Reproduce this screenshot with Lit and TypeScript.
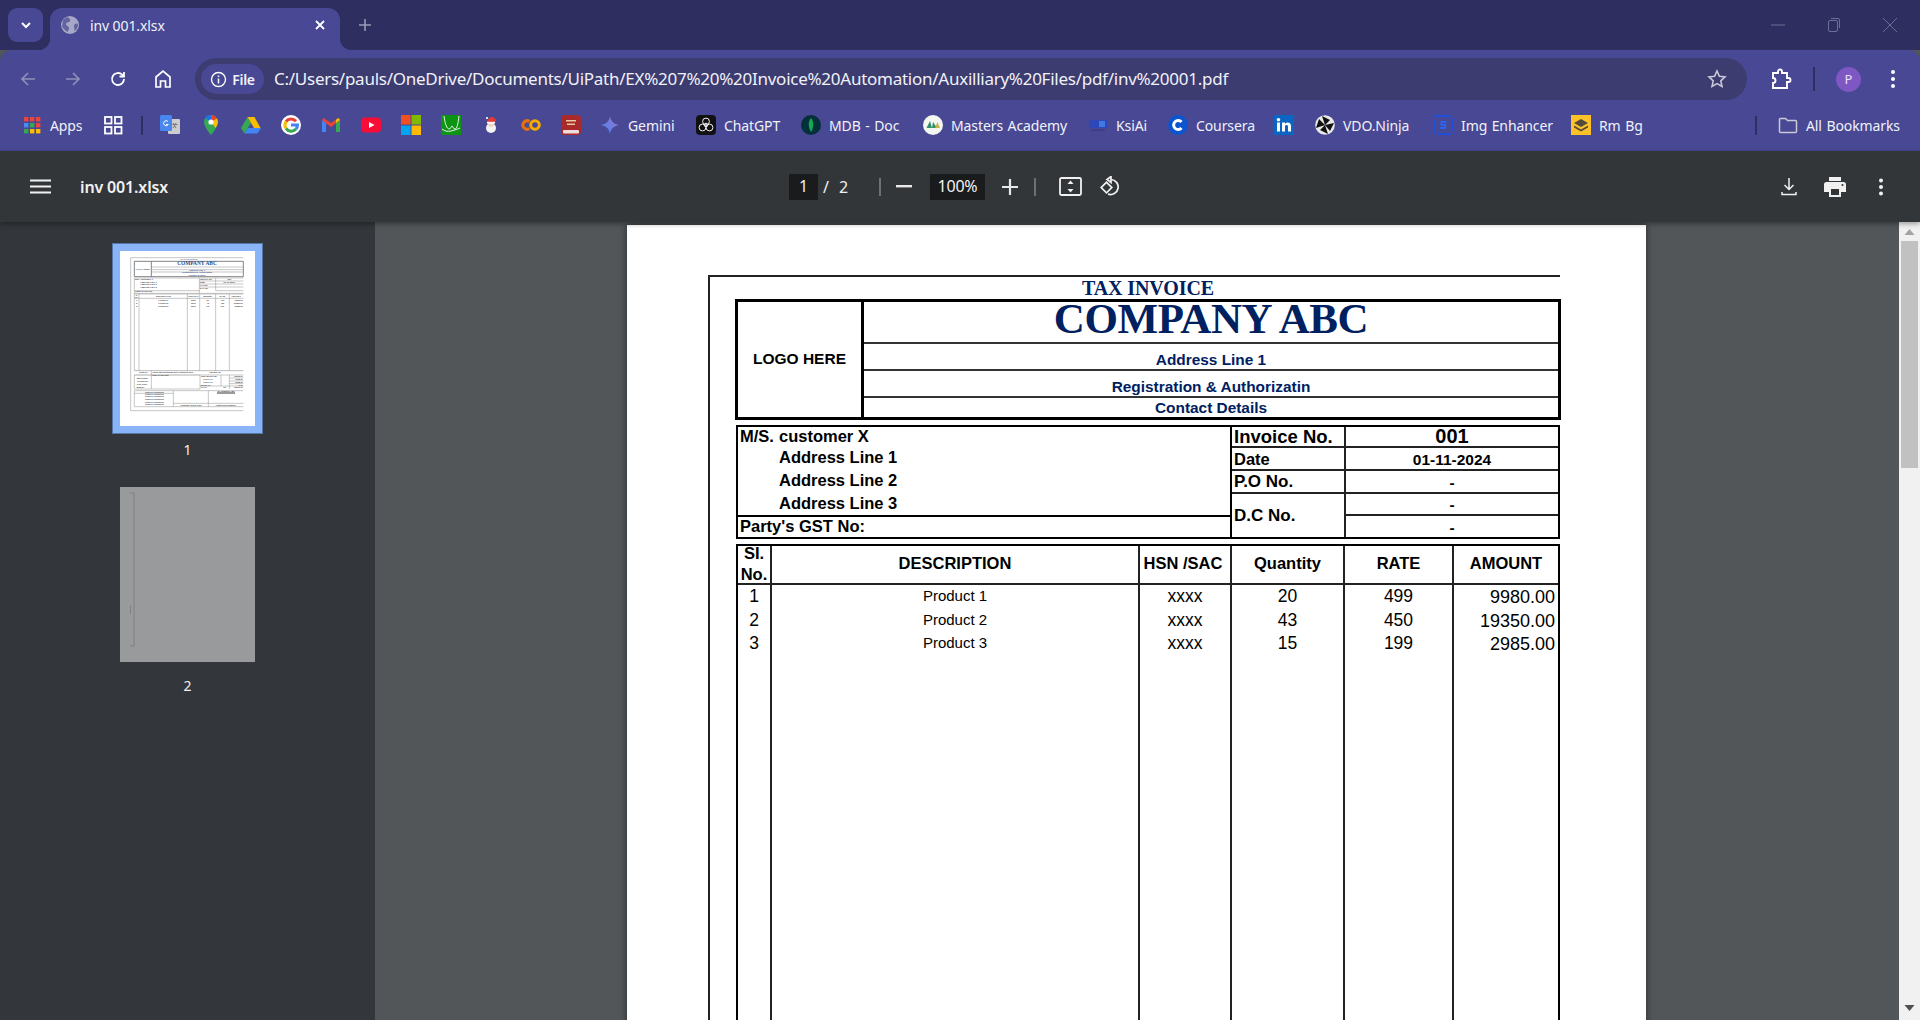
import { LitElement, html, css, svg } from "lit";
import { customElement } from "lit/decorators.js";

const bmIcons: Record<string, unknown> = {
  apps: svg`${[0,1,2].flatMap(r=>[0,1,2].map(c=>svg`<rect x=${2+c*6} y=${2+r*6} width="4.4" height="4.4" fill=${[["#e8453c","#e8453c","#e8453c"],["#4a8af4","#34a853","#e8453c"],["#34a853","#fbbc05","#fbbc05"]][r][c]}/>`))}`,
  grid: svg`<g fill="none" stroke="#fff" stroke-width="1.8"><rect x="2" y="2" width="6.5" height="6.5"/><rect x="12" y="2" width="6.5" height="6.5"/><rect x="2" y="12" width="6.5" height="6.5"/><rect x="12" y="12" width="6.5" height="6.5"/></g>`,
  translate: svg`<rect x="8" y="4" width="12" height="15" rx="1" fill="#ccc"/><rect x="0" y="0" width="12" height="16" rx="1.5" fill="#4a86f0"/><path d="M13 8l3 5M16 8l-3 5M12.5 9.5h5" stroke="#777" fill="none"/><path d="M8 6.5a2.5 2.5 0 1 0 .3 3H6" stroke="#fff" stroke-width="1" fill="none"/>`,
  maps: svg`<path d="M10 0a7 7 0 0 0-7 7c0 5 7 13 7 13s7-8 7-13a7 7 0 0 0-7-7z" fill="#34a853"/><path d="M4 2.8A7 7 0 0 1 10 0v7z" fill="#1a73e8"/><path d="M10 0a7 7 0 0 1 6 3.4L10 7z" fill="#ea4335"/><path d="M16 3.4A7 7 0 0 1 17 7c0 2-1.2 4.2-2.5 6L10 7z" fill="#fbbc05"/><circle cx="10" cy="7" r="2.6" fill="#fff"/>`,
  drive: svg`<path d="M6.5 2L0 13l3.5 5.500L10 8z" fill="#34a853"/><path d="M3.5 18.500h13L20 13H7z" fill="#4285f4"/><path d="M13.500 2l6 11h-6.500L6.500 2z" fill="#fbbc05"/>`,
  google: svg`<circle cx="10" cy="10" r="10" fill="#fff"/><g fill="none" stroke-width="3"><path d="M15 6.200A6.500 6.500 0 0 0 5 6.500" stroke="#ea4335"/><path d="M5 6.500a6.500 6.500 0 0 0 0 7" stroke="#fbbc05"/><path d="M5 13.500a6.500 6.500 0 0 0 10 .6" stroke="#34a853"/><path d="M15 14.100A6.500 6.500 0 0 0 16.500 10H10" stroke="#4285f4"/></g>`,
  gmail: svg`<path d="M1 5v12h4V8z" fill="#4285f4"/><path d="M15 8v9h4V5z" fill="#34a853"/><path d="M1 5l9 7 9-7-1.500-2L10 8 2.500 3z" fill="#ea4335"/><path d="M15 8l4-3-1.500-2L15 4.800z" fill="#fbbc05"/>`,
  yt: svg`<rect x="0" y="2.500" width="20" height="15" rx="4" fill="#f70d36"/><path d="M8 7l5.500 3L8 13z" fill="#fff"/>`,
  ms: svg`<rect width="9.500" height="9.500" fill="#f25022"/><rect x="10.500" width="9.500" height="9.500" fill="#7fba00"/><rect y="10.500" width="9.500" height="9.500" fill="#00a4ef"/><rect x="10.500" y="10.500" width="9.500" height="9.500" fill="#ffb900"/>`,
  green: svg`<rect width="20" height="20" fill="#0d9412"/><path d="M3 1c1 8 3 13 5 13s2-3 3-3 1 3 3 3 3-5 4-13M1 14c3 2 5 3 9 2s7-2 9-3" stroke="#fff" stroke-width=".9" fill="none"/>`,
  santa: svg`<circle cx="10" cy="13" r="5" fill="#f3f3f3"/><circle cx="10" cy="9" r="3" fill="#f6d6c0"/><path d="M6 8c0-4 3-6 5-6s3 2 4 3l-1 3z" fill="#e53935"/><rect x="6" y="6.800" width="8" height="1.800" fill="#fff"/><circle cx="6" cy="3" r="1.100" fill="#fff"/>`,
  co: svg`<g fill="none" stroke-width="3"><path d="M8.500 6.500a4.200 4.200 0 1 0 0 7" stroke="#e8710a"/><circle cx="14" cy="10" r="4.300" stroke="#f9ab00"/></g>`,
  book: svg`<rect width="20" height="20" rx="4" fill="#a82a2a"/><rect y="15" x="2" width="16" height="3.500" rx="1" fill="#f0dcdc"/><rect x="5" y="5" width="10" height="1.500" fill="#e9c9a0"/><rect x="6" y="8.500" width="8" height="1.500" fill="#e9c9a0"/>`,
  gemini: svg`<defs><linearGradient id="gm" x1="0" y1="1" x2="1" y2="0"><stop offset="0" stop-color="#4285f4"/><stop offset="1" stop-color="#9b72cb"/></linearGradient></defs><path d="M10 1c.8 5 3.500 8 9 9-5.500 1-8.200 4-9 9-.8-5-3.500-8-9-9 5.500-1 8.200-4 9-9z" fill="url(#gm)"/>`,
  chatgpt: svg`<rect width="20" height="20" rx="4" fill="#111"/><g fill="none" stroke="#eee" stroke-width="1"><circle cx="10" cy="6.500" r="3.400"/><circle cx="6.500" cy="12.500" r="3.400"/><circle cx="13.500" cy="12.500" r="3.400"/><circle cx="10" cy="10" r="1.800"/></g>`,
  mdb: svg`<circle cx="10" cy="10" r="10" fill="#04303a"/><path d="M10 3c3 3.500 3 9 0 14-3-5-3-10.500 0-14z" fill="#13aa52"/>`,
  masters: svg`<circle cx="10" cy="10" r="10" fill="#f4f6f0"/><path d="M3.500 13L7 6l2 7zM9 13l1-6 4 6z" fill="#2f8f6b"/><path d="M12 13l2.500-6 2.500 6z" fill="#c9b24a"/>`,
  ksi: svg`<rect x="1" y="5" width="18" height="8" fill="#2f47b8"/><rect x="11" y="6" width="6" height="6" fill="#3e7be0"/><rect x="3" y="14.500" width="14" height="1.200" fill="#39397c"/>`,
  coursera: svg`<circle cx="10" cy="10" r="10" fill="#0b56d0"/><path d="M13.500 7a4.500 4.500 0 1 0 0 6" fill="none" stroke="#fff" stroke-width="3"/>`,
  in: svg`<rect width="20" height="20" fill="#0a66c2"/><rect x="3" y="7.500" width="3" height="9" fill="#fff"/><circle cx="4.500" cy="4.800" r="1.800" fill="#fff"/><path d="M8 7.500h3v1.400c1.500-2.400 6-2 6 2.100v5.500h-3v-5c0-2-3-2-3 0v5H8z" fill="#fff"/>`,
  vdo: svg`<circle cx="10" cy="10" r="9.800" fill="#e8e8e8"/><path d="M10 10L7 1l8 4zM10 10l9-2-4 8zM10 10l3 9-8-4zM10 10L1 13l3-9z" fill="#111"/>`,
  img: svg`<rect x="1" y="1" width="18" height="18" rx="2.500" fill="none" stroke="#1f4fd8" stroke-width="2" stroke-dasharray="14 2"/><path d="M13.500 7H8.500v3h3.500v3H7" fill="none" stroke="#2c63ec" stroke-width="2"/>`,
  rm: svg`<rect width="20" height="20" fill="#fcc227"/><path d="M10 4l7 4-7 4-7-4z" fill="#544a3a"/><path d="M3 10.500l7 4 7-4v2l-7 4-7-4z" fill="#544a3a"/>`,
  folder: svg`<path d="M1.500 4.500a1 1 0 0 1 1-1h5l2 2h8a1 1 0 0 1 1 1v10a1 1 0 0 1-1 1h-15a1 1 0 0 1-1-1z" fill="none" stroke="#c9c9d6" stroke-width="1.500"/>`,
};

const bookmarks = [
  { i: "apps", x: 22, t: "Apps" }, { i: "grid", x: 103 }, { s: 1, x: 141 }, { i: "translate", x: 160 },
  { i: "maps", x: 201 }, { i: "drive", x: 241 }, { i: "google", x: 281 }, { i: "gmail", x: 321 },
  { i: "yt", x: 361 }, { i: "ms", x: 401 }, { i: "green", x: 441 }, { i: "santa", x: 481 },
  { i: "co", x: 521 }, { i: "book", x: 561 }, { i: "gemini", x: 600, t: "Gemini" },
  { i: "chatgpt", x: 696, t: "ChatGPT" }, { i: "mdb", x: 801, t: "MDB - Doc" },
  { i: "masters", x: 923, t: "Masters Academy" }, { i: "ksi", x: 1088, t: "KsiAi" },
  { i: "coursera", x: 1168, t: "Coursera" }, { i: "in", x: 1274 }, { i: "vdo", x: 1315, t: "VDO.Ninja" },
  { i: "img", x: 1433, t: "Img Enhancer" }, { i: "rm", x: 1571, t: "Rm Bg" }, { s: 1, x: 1755 },
  { i: "folder", x: 1778, t: "All Bookmarks" },
];

const T = (x: number, y: number, s: string, size = 7, anchor = "start", fill = "#444", weight = "bold", fam = "Liberation Sans") =>
  svg`<text x=${x} y=${y} font-size=${size} text-anchor=${anchor} fill=${fill} font-weight=${weight} font-family=${fam}>${s}</text>`;
const L = (x1: number, y1: number, x2: number, y2: number, w = 1.5, c = "#8c8c8c") =>
  svg`<line x1=${x1} y1=${y1} x2=${x2} y2=${y2} stroke=${c} stroke-width=${w}/>`;

@customElement("app-root")
export class AppRoot extends LitElement {
  static styles = css`
    :host { display: block; width: 1920px; height: 1020px; overflow: hidden; background: #525659; font-family: "Noto Sans", sans-serif; }
    svg { display: block; flex: none; }
    .strip { height: 50px; background: #2e2e60; display: flex; align-items: flex-start; padding-top: 8px; box-sizing: border-box; }
    .tablist { width: 35px; height: 34px; margin-left: 8px; border-radius: 9px; background: #484895; display: flex; align-items: center; justify-content: center; }
    .tab { position: relative; width: 290px; height: 42px; margin-left: 7px; background: #484895; border-radius: 12px 12px 0 0; display: flex; align-items: center; padding: 0 14px 8px 11px; box-sizing: border-box; color: #f1f1f8; font-size: 14px; letter-spacing: -.1px; }
    .tab::before, .tab::after { content: ""; position: absolute; bottom: 0; width: 12px; height: 12px; }
    .tab::before { left: -12px; background: radial-gradient(circle at 0 0, transparent 12px, #484895 12.5px); }
    .tab::after { right: -12px; background: radial-gradient(circle at 100% 0, transparent 12px, #484895 12.5px); }
    .tab .title { margin-left: 11px; flex: 1; }
    .newtab { margin: 10px 0 0 18px; }
    .win { margin-left: auto; display: flex; align-items: center; height: 34px; padding-right: 2px; }
    .toolbar { height: 50px; background: #484895; border-radius: 12px 12px 0 0; display: flex; align-items: center; padding: 8px 0 0 5px; box-sizing: border-box; }
    .nav { width: 45px; height: 42px; display: flex; align-items: center; justify-content: center; }
    .omni { width: 1552px; height: 42px; margin-left: 10px; border-radius: 21px; background: #3c3c70; display: flex; align-items: center; padding: 0 20px 0 6px; box-sizing: border-box; color: #f1f1f8; }
    .chip { width: 63px; height: 30px; border-radius: 15px; background: #484895; display: flex; align-items: center; justify-content: center; gap: 5px; font-size: 14px; font-weight: 600; letter-spacing: -.3px; }
    .url { margin-left: 10px; font-size: 17px; flex: 1; white-space: nowrap; letter-spacing: -.26px; padding-bottom: 1px; }
    .ext { width: 22px; margin-left: 23px; }
    .tsep { width: 2px; height: 24px; background: #2e2e60; margin-left: 21px; }
    .avatar { width: 25px; height: 25px; border-radius: 50%; background: #7e57c2; color: #e8e0f6; font-size: 13px; display: flex; align-items: center; justify-content: center; margin-left: 21px; }
    .more { margin-left: 29px; }
    .bar { height: 51px; background: #484895; display: flex; align-items: center; padding: 0 0 1px 22px; box-sizing: border-box; color: #f1f1f8; font-size: 14px; letter-spacing: -.1px; word-spacing: 1px; }
    .bm { flex: none; display: flex; align-items: center; gap: 8px; white-space: nowrap; }
    .bsep { width: 2px; height: 19px; background: #2e2e60; }
    .pdfbar { position: relative; z-index: 2; height: 71px; background: #323639; display: flex; align-items: center; color: #f1f1f1; box-shadow: 0 2px 5px rgba(0,0,0,.35); }
    .left { width: 789px; display: flex; align-items: center; padding-left: 30px; box-sizing: border-box; }
    .doc { margin-left: 29px; font-size: 16px; font-weight: 600; letter-spacing: -.15px; }
    .pageinput, .zoominput { height: 26px; background: #191b1c; display: flex; align-items: center; justify-content: center; font-size: 16px; padding-bottom: 1px; box-sizing: border-box; }
    .pageinput { width: 29px; }
    .zoominput { width: 55px; letter-spacing: -.2px; }
    .of { width: 61px; font-size: 16px; padding-left: 5px; box-sizing: border-box; word-spacing: 6px; }
    .psep { width: 2px; height: 18px; background: #6e7174; }
    .pbtn { height: 26px; display: flex; align-items: center; justify-content: center; }
    .b49 { width: 49px; padding-right: 4px; box-sizing: border-box; }
    .b50 { width: 49px; }
    .fit { width: 58px; margin-left: 5px; }
    .rot { width: 22px; }
    .right { margin-left: auto; display: flex; padding-right: 16px; }
    .right .pbtn { width: 46px; }
    .main { display: flex; height: 798px; }
    .side { width: 375px; background: #33363a; display: flex; flex-direction: column; align-items: center; padding-top: 21px; box-sizing: border-box; color: #f1f1f1; font-size: 14px; }
    .thumb { border: 8px solid transparent; width: 135px; height: 175px; background: #fff; background-clip: padding-box; }
    .thumb.sel { border-color: #8ab4f8; outline: 1px solid #5577a8; outline-offset: -1px; }
    .thumb.dim { background: #999a9b; background-clip: padding-box; }
    .num { height: 20px; line-height: 20px; margin-top: 6px; }
    .gap { height: 19px; }
    .viewer { flex: 1; overflow: hidden; display: flex; justify-content: center; padding-top: 3px; box-sizing: border-box; }
    .scroll { width: 21px; background: #f1f1f1; display: flex; flex-direction: column; align-items: center; }
    .up { margin-top: 7px; }
    .sthumb { width: 17px; height: 227px; background: #c1c1c1; margin-top: 6px; }
    .down { margin-top: auto; margin-bottom: 9px; }
    .page { width: 1019px; height: 1320px; margin-left: -1px; background: #fff; box-shadow: 0 0 7px rgba(0,0,0,.5); padding: 50px 0 0 81px; box-sizing: border-box; flex: none; color: #000; font-family: "Liberation Sans", Arial, sans-serif; font-weight: bold; }
    .frame { width: 852px; height: 1200px; border-top: 2px solid #222; border-left: 2px solid #222; box-sizing: border-box; padding-left: 25px; }
    .tax { height: 22px; width: 826px; text-align: center; font: bold 20px/23px "Liberation Serif", serif; letter-spacing: -.1px; color: #002060; }
    .hbox { width: 826px; height: 121px; border: 3px solid #000; box-sizing: border-box; display: flex; }
    .logo { width: 126px; border-right: 3px solid #000; box-sizing: border-box; display: flex; align-items: center; justify-content: center; font-size: 15.500px; padding-bottom: 2px; }
    .hr { flex: 1; display: flex; flex-direction: column; color: #002060; }
    .hl { display: flex; justify-content: center; box-sizing: border-box; border-bottom: 2px solid #333; font-size: 15.400px; align-items: flex-end; }
    .co { height: 42px; font: bold 43px/34px "Liberation Serif", serif; letter-spacing: -.4px; align-items: flex-start; }
    .h27 { height: 27px; }
    .last { flex: 1; border-bottom: 0; align-items: center; }
    .cust { width: 824px; height: 114px; margin: 5px 0 0 1px; border: 2px solid #000; box-sizing: border-box; display: flex; }
    .cl { width: 494px; border-right: 2px solid #000; box-sizing: border-box; display: flex; flex-direction: column; font-size: 16.500px; }
    .ctop { height: 90px; box-sizing: border-box; border-bottom: 2px solid #000; padding-left: 2px; display: grid; grid-template-columns: 39px 1fr; grid-template-rows: 19px 23px 23px 23px; align-items: center; }
    .gst { flex: 1; display: flex; align-items: center; padding: 0 0 1px 2px; }
    .cr { flex: 1; display: grid; grid-template-columns: 114px 1fr; grid-template-rows: 21px 23px 23px 22px 21px; }
    .cc { box-sizing: border-box; display: flex; align-items: center; border-bottom: 2px solid #222; }
    .lab { border-right: 2px solid #222; padding: 1px 0 0 2px; font-size: 17px; }
    .big { font-size: 18.500px; }
    .dt { font-size: 16.500px; }
    .val { justify-content: center; font-size: 15.500px; padding-top: 2px; }
    .v001 { font-size: 20px; padding-top: 0; }
    .span2 { grid-row: span 2; }
    .nob { border-bottom: 0; }
    .tbl { width: 824px; margin: 5px 0 0 1px; border: 2px solid #000; border-bottom: 0; box-sizing: border-box; }
    .cols { display: grid; grid-template-columns: 34px 368px 92px 113px 109px 104px; }
    .th { height: 39px; box-sizing: border-box; border-right: 2px solid #222; border-bottom: 2px solid #222; display: flex; flex-direction: column; align-items: center; justify-content: center; font-size: 16.500px; padding-bottom: 2px; line-height: 21px; }
    .hsn { padding-right: 4px; }
    .col { height: 520px; box-sizing: border-box; border-right: 2px solid #222; font-weight: normal; font-size: 17.500px; text-align: center; }
    .end { border-right: 0; }
    .col div { display: flex; align-items: center; justify-content: center; }
    .r1 { height: 23px; }
    .r2 { height: 24px; }
    .col.prod { font-size: 15px; }
    .col.prod div { position: relative; top: -1px; }
    .amt { font-size: 18px; padding-top: 1px; }
    .amt div { justify-content: flex-end; padding-right: 3px; }
  `;

  private bms() {
    return bookmarks.map((b: any, n) => {
      const next = (bookmarks[n + 1] as any)?.x ?? 1920;
      const w = next - b.x;
      if (b.s) return html`<div class="bm" style="width:${w}px"><div class="bsep"></div></div>`;
      return html`<div class="bm" style="width:${w}px"><svg width="20" height="20" viewBox="0 0 20 20">${bmIcons[b.i]}</svg>${b.t ? html`<span>${b.t}</span>` : ""}</div>`;
    });
  }

  private thumb1() {
    const lines = [
      L(62,53,400,53), L(62,53,62,512), L(62,512,400,512),
      L(73,64,400,64,2.4,"#666"), L(73,110,400,110,2.4,"#666"), L(73,64,73,110,2.4,"#666"), L(400,64,400,110,2.4,"#666"), L(124,64,124,110,2.4,"#666"),
      L(124,81,400,81), L(124,89,400,89), L(124,96,400,96),
      L(73,114,400,114), L(73,114,73,392), L(73,152,268,152), L(73,160,400,160), L(268,114,268,160), L(317,114,317,152),
      L(268,123,400,123), L(268,132,400,132), L(268,141,400,141), L(317,152,400,152),
      L(73,162,400,162), L(73,175,400,175), L(87,162,87,392), L(232,162,232,392), L(269,162,269,392,2.4,"#bbb"), L(317,162,317,392), L(358,162,358,392),
      L(73,392,400,392,1.8), L(73,405,270,405,1.8,"#777"), L(73,405,73,447), L(124,392,124,447), L(73,447,270,447), L(270,405,400,405),
      L(270,405,270,447), L(333,405,333,438), L(358,405,358,447), L(270,438,400,438), L(358,414,400,414), L(358,423,400,423), L(358,431,400,431),
      L(73,452,400,452), L(73,452,73,500), L(73,500,400,500), L(190,452,190,500), L(295,452,295,500), L(190,490,400,490), L(73,460,190,460),
      L(321,459,375,459,2.4,"#000"),
    ];
    const sm = "#444";
    const txt = [
      T(237,59,"TAX INVOICE",8,"middle","#2b4a80","bold","Liberation Serif"),
      T(261,74,"COMPANY ABC",16,"middle","#2f4c85","bold","Liberation Serif"),
      T(98,90,"LOGO HERE",7,"middle",sm), T(261,92,"Address Line 1",7,"middle","#3f5f9c"), T(261,99,"Registration & Authorizatin",7,"middle","#3f5f9c"), T(261,107,"Contact Details",7,"middle","#3f5f9c"),
      T(75,120,"M/S.  customer X",7,"start",sm), T(90,128,"Address Line 1",7,"start",sm), T(90,136,"Address Line 2",7,"start",sm), T(90,144,"Address Line 3",7,"start",sm), T(75,157,"Party's GST No:",7,"start",sm),
      T(270,120,"Invoice No.",7,"start",sm), T(358,120,"001",7,"middle",sm), T(270,129,"Date",7,"start",sm), T(358,129,"01-11-2024",7,"middle",sm), T(270,138,"P.O No.",7,"start",sm), T(270,148,"D.C No.",7,"start",sm),
      T(80,167,"SI.",5,"middle",sm), T(80,173,"No.",5,"middle",sm),
      T(160,171,"DESCRIPTION",6.500,"middle",sm), T(250,171,"HSN /SAC",6.500,"middle",sm), T(293,171,"Quantity",6.500,"middle",sm), T(337,171,"RATE",6.500,"middle",sm), T(378,171,"AMOUNT",6.500,"middle",sm),
      ...[[184,"1","Product 1","20","499","9980.00"],[192,"2","Product 2","43","450","19350.00"],[200,"3","Product 3","15","199","2985.00"]].flatMap(r => [
        T(80,r[0] as number,r[1] as string,6.500,"middle",sm), T(160,r[0] as number,r[2] as string,6.500,"middle",sm), T(250,r[0] as number,"xxxx",6.500,"middle",sm),
        T(293,r[0] as number,r[3] as string,6.500,"middle",sm), T(337,r[0] as number,r[4] as string,6.500,"middle",sm), T(398,r[0] as number,r[5] as string,6.500,"end",sm),
      ]),
      T(88,399,"Rupees :",6.500,"start",sm), T(127,399,"Thirty-two thousand three hundred only",6.500,"start",sm), T(297,399,"Amt Qty  78",6.500,"start",sm),
      T(127,409,"Rate of Tax only",6.500,"start",sm), T(80,417,"Bank Name :",6,"start",sm), T(80,426,"Account No :",6,"start",sm), T(80,435,"IFSC Code :",6,"start",sm), T(80,444,"Branch :",6,"start",sm),
      T(272,411,"Value Before Tax",6,"start",sm), T(280,420,"CGST 9 %",6,"start",sm), T(280,429,"SGST 9 %",6,"start",sm), T(272,437,"Round Off",6,"start",sm), T(272,445,"TOTAL",6,"start",sm),
      T(398,411,"32315.00",6,"end",sm), T(398,420,"2908.00",6,"end",sm), T(398,429,"2908.00",6,"end",sm), T(398,437,"0.00",6,"end",sm), T(398,445,"38131.00",6,"end",sm), T(340,445,"Rs.",6,"start",sm),
      ...[458,465,472,481,488,495].map(y => T(133,y,"Terms & Conditions",6,"middle",sm)),
      T(348,457,"for Company ABC",6,"middle",sm), T(243,497,"Customer Seal & Sign",6,"middle",sm), T(347,497,"Authorised Signatory",6,"middle",sm),
    ];
    return html`<svg width="135" height="175" viewBox="30 33 405 525">${lines}${txt}</svg>`;
  }

  render() {
    return html`
      <div class="strip">
        <div class="tablist"><svg width="14" height="14" viewBox="0 0 14 14"><path d="M3 5l4 4 4-4" fill="none" stroke="#fff" stroke-width="2"/></svg></div>
        <div class="tab">
          <svg width="18" height="18" viewBox="0 0 18 18"><circle cx="9" cy="9" r="9" fill="#a7a7c7"/><path d="M6 1c2 1 4 2 3 4S5 6 5 8s3 2 3 4-1 3-2 4L1 11 2 4zM17 8c-2-1-4 0-4 2s1 3 0 5c3-1 4-4 4-7z" fill="#6363a0"/></svg>
          <span class="title">inv 001.xlsx</span>
          <svg width="12" height="12" viewBox="0 0 12 12"><path d="M2 2l8 8M10 2l-8 8" stroke="#fff" stroke-width="1.800"/></svg>
        </div>
        <svg class="newtab" width="14" height="14" viewBox="0 0 14 14"><path d="M7 1v12M1 7h12" stroke="#9a9ab8" stroke-width="1.600"/></svg>
        <div class="win">
          <svg width="56" height="16" viewBox="0 0 56 16"><path d="M21 8h14" stroke="#6e6e94" stroke-width="1"/></svg>
          <svg width="56" height="16" viewBox="0 0 56 16"><g fill="none" stroke="#6e6e94"><rect x="22.500" y="3.500" width="9" height="11" rx="1.500"/><path d="M25 1.500h7a1.500 1.500 0 0 1 1.500 1.500v8"/></g></svg>
          <svg width="56" height="16" viewBox="0 0 56 16"><path d="M21 1l14 14M35 1L21 15" stroke="#6e6e94" stroke-width="1"/></svg>
        </div>
      </div>
      <div class="toolbar">
        <div class="nav"><svg width="18" height="18" viewBox="0 0 18 18"><path d="M16 9H3M9 3L3 9l6 6" fill="none" stroke="#8f8fb8" stroke-width="1.700"/></svg></div>
        <div class="nav"><svg width="18" height="18" viewBox="0 0 18 18"><path d="M2 9h13M9 3l6 6-6 6" fill="none" stroke="#8f8fb8" stroke-width="1.700"/></svg></div>
        <div class="nav"><svg width="18" height="18" viewBox="0 0 18 18"><path d="M15 9a6 6 0 1 1-1.800-4.300L15 6.500M15 2v4.500h-4.500" fill="none" stroke="#fff" stroke-width="1.800"/></svg></div>
        <div class="nav"><svg width="18" height="20" viewBox="0 0 18 20"><path d="M2 18V8l7-6 7 6v10h-4.500v-6h-5v6z" fill="none" stroke="#fff" stroke-width="1.700"/></svg></div>
        <div class="omni">
          <div class="chip"><svg width="17" height="17" viewBox="0 0 17 17"><circle cx="8.500" cy="8.500" r="7" fill="none" stroke="#fff" stroke-width="1.400"/><path d="M8.500 7.500v5M8.500 4.500v1.600" stroke="#fff" stroke-width="1.500"/></svg>File</div>
          <div class="url">C:/Users/pauls/OneDrive/Documents/UiPath/EX%207%20%20Invoice%20Automation/Auxilliary%20Files/pdf/inv%20001.pdf</div>
          <svg width="20" height="20" viewBox="0 0 20 20"><path d="M10 2l2.400 5.300 5.600.6-4.200 3.900 1.200 5.700L10 14.600l-5 2.900 1.200-5.700L2 7.900l5.600-.6z" fill="none" stroke="#c8c8d8" stroke-width="1.600"/></svg>
        </div>
        <svg class="ext" width="22" height="22" viewBox="0 0 22 22"><path d="M3 5h5V3.500a2 2 0 0 1 4 0V5h5v5h1.500a2 2 0 0 1 0 4H17v6H3v-5a2.500 2.500 0 0 0 0-5z" fill="none" stroke="#fff" stroke-width="1.900"/></svg>
        <div class="tsep"></div>
        <div class="avatar">P</div>
        <svg class="more" width="6" height="20" viewBox="0 0 6 20"><circle cx="3" cy="3" r="2" fill="#fff"/><circle cx="3" cy="10" r="2" fill="#fff"/><circle cx="3" cy="17" r="2" fill="#fff"/></svg>
      </div>
      <div class="bar">${this.bms()}</div>
      <div class="pdfbar">
        <div class="left">
          <svg width="21" height="15" viewBox="0 0 21 15"><path d="M0 1.500h21M0 7.500h21M0 13.500h21" stroke="#f1f1f1" stroke-width="2.200"/></svg>
          <span class="doc">inv 001.xlsx</span>
        </div>
        <div class="pageinput">1</div>
        <div class="of">/ 2</div>
        <div class="psep"></div>
        <div class="pbtn b49"><svg width="16" height="3" viewBox="0 0 16 3"><rect width="16" height="2.400" fill="#e8e8e8"/></svg></div>
        <div class="zoominput">100%</div>
        <div class="pbtn b50"><svg width="16" height="16" viewBox="0 0 16 16"><path d="M8 0v16M0 8h16" stroke="#e8e8e8" stroke-width="2.200"/></svg></div>
        <div class="psep"></div>
        <div class="pbtn fit"><svg width="23" height="19" viewBox="0 0 23 19"><rect x="1" y="1" width="21" height="17" rx="1.500" fill="none" stroke="#f1f1f1" stroke-width="1.800"/><path d="M11.500 3.500l3 3.500h-6zM11.500 15.500l-3-3.500h6z" fill="#f1f1f1"/></svg></div>
        <div class="pbtn rot"><svg width="22" height="22" viewBox="0 0 22 22"><path d="M12 3.500a7.500 7.500 0 1 1-3 14.500M12 0.500v6l-4-3z" fill="none" stroke="#f1f1f1" stroke-width="1.700"/><rect x="3.800" y="7.800" width="7.500" height="7.500" transform="rotate(45 7.500 11.500)" fill="none" stroke="#f1f1f1" stroke-width="1.700"/></svg></div>
        <div class="right">
          <div class="pbtn"><svg width="16" height="18" viewBox="0 0 16 18"><path d="M8 0v11M3.500 7L8 11.500 12.500 7M1 14v2.500h14V14" fill="none" stroke="#f1f1f1" stroke-width="1.500"/></svg></div>
          <div class="pbtn"><svg width="22" height="20" viewBox="0 0 22 20"><path d="M5 0h12v4H5zM2.500 5h17A2.500 2.500 0 0 1 22 7.500V15h-5v5H5v-5H0V7.500A2.500 2.500 0 0 1 2.500 5z" fill="#f1f1f1"/><rect x="7" y="12" width="8" height="6" fill="#323639"/><circle cx="18.500" cy="8" r="1.100" fill="#323639"/></svg></div>
          <div class="pbtn"><svg width="6" height="18" viewBox="0 0 6 18"><circle cx="3" cy="2.500" r="2" fill="#f1f1f1"/><circle cx="3" cy="9" r="2" fill="#f1f1f1"/><circle cx="3" cy="15.500" r="2" fill="#f1f1f1"/></svg></div>
        </div>
      </div>
      <div class="main">
        <div class="side">
          <div class="thumb sel">${this.thumb1()}</div>
          <div class="num">1</div>
          <div class="gap"></div>
          <div class="thumb dim"><svg width="135" height="175" viewBox="0 0 135 175"><path d="M10 6h4v153h-4M10.500 118v9" fill="none" stroke="#7b7c7e" stroke-width=".8"/></svg></div>
          <div class="num">2</div>
        </div>
        <div class="viewer">
          <div class="page">
            <div class="frame">
              <div class="tax">TAX INVOICE</div>
              <div class="hbox">
                <div class="logo">LOGO HERE</div>
                <div class="hr">
                  <div class="hl co">COMPANY ABC</div>
                  <div class="hl h27">Address Line 1</div>
                  <div class="hl h27">Registration &amp; Authorizatin</div>
                  <div class="hl last">Contact Details</div>
                </div>
              </div>
              <div class="cust">
                <div class="cl">
                  <div class="ctop">
                    <span>M/S.</span><span>customer X</span>
                    <span></span><span>Address Line 1</span>
                    <span></span><span>Address Line 2</span>
                    <span></span><span>Address Line 3</span>
                  </div>
                  <div class="gst">Party's GST No:</div>
                </div>
                <div class="cr">
                  <div class="cc lab big">Invoice No.</div><div class="cc val v001">001</div>
                  <div class="cc lab dt">Date</div><div class="cc val">01-11-2024</div>
                  <div class="cc lab">P.O No.</div><div class="cc val">-</div>
                  <div class="cc lab span2 nob">D.C No.</div><div class="cc val">-</div>
                  <div class="cc val nob">-</div>
                </div>
              </div>
              <div class="tbl">
                <div class="cols">
                  <div class="th"><span>SI.</span><span>No.</span></div>
                  <div class="th">DESCRIPTION</div>
                  <div class="th hsn">HSN /SAC</div>
                  <div class="th">Quantity</div>
                  <div class="th">RATE</div>
                  <div class="th end">AMOUNT</div>
                </div>
                <div class="cols">
                  <div class="col"><div class="r1">1</div><div class="r2">2</div><div class="r1">3</div></div>
                  <div class="col prod"><div class="r1">Product 1</div><div class="r2">Product 2</div><div class="r1">Product 3</div></div>
                  <div class="col"><div class="r1">xxxx</div><div class="r2">xxxx</div><div class="r1">xxxx</div></div>
                  <div class="col"><div class="r1">20</div><div class="r2">43</div><div class="r1">15</div></div>
                  <div class="col"><div class="r1">499</div><div class="r2">450</div><div class="r1">199</div></div>
                  <div class="col end amt"><div class="r1">9980.00</div><div class="r2">19350.00</div><div class="r1">2985.00</div></div>
                </div>
              </div>
            </div>
          </div>
        </div>
        <div class="scroll">
          <svg class="up" width="11" height="6" viewBox="0 0 11 6"><path d="M5.500 0l5 6H.5z" fill="#a3a3a3"/></svg>
          <div class="sthumb"></div>
          <svg class="down" width="11" height="6" viewBox="0 0 11 6"><path d="M5.500 6l5-6H.5z" fill="#505050"/></svg>
        </div>
      </div>
    `;
  }
}
